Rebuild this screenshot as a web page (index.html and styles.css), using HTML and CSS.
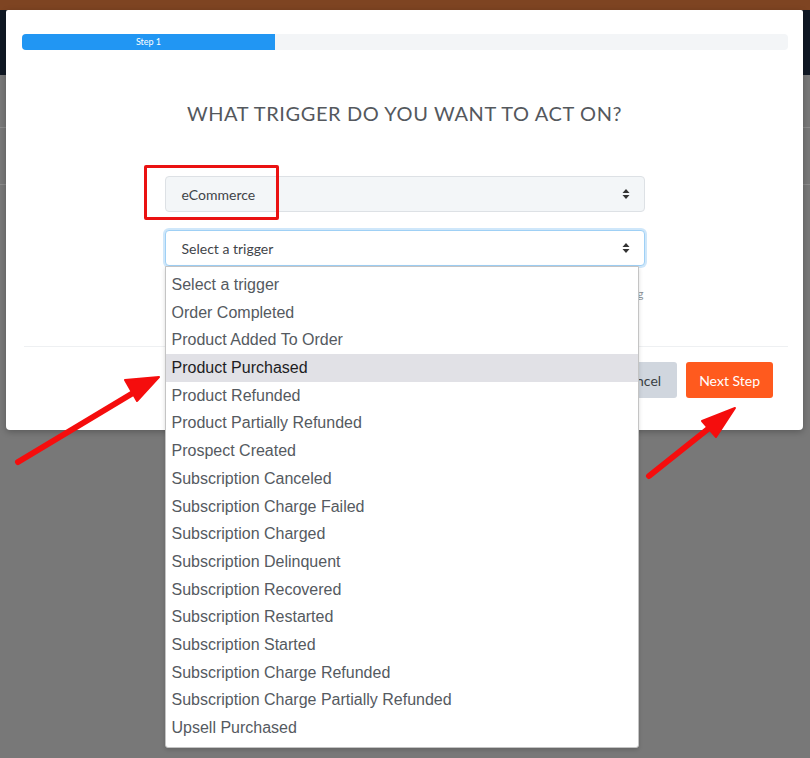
FILE: index.html
```html
<!DOCTYPE html>
<html lang="en">
<head>
  <meta charset="UTF-8">
  <meta name="viewport" content="width=device-width, initial-scale=1.0">
  <title>Select a trigger</title>
  <link rel="stylesheet" href="styles.css">
</head>
<body>

  <!-- dimmed page behind the modal -->
  <div class="page">
    <div class="topbar"></div>
    <div class="navbar"></div>
    <div class="page-lines">
      <div class="page-line"></div>
      <div class="page-line"></div>
    </div>
  </div>

  <div class="modal">
    <div class="progress">
      <div class="progress-fill">Step 1</div>
    </div>

    <h2 class="modal-title">What trigger do you want to act on?</h2>

    <div class="form">
      <div class="field category-field">
        <div class="select">
          <span>eCommerce</span>
          <svg class="caret" width="8" height="12" viewBox="0 0 8 12"><path d="M4 1 L7.5 5 H0.5 Z M4 11 L7.5 7 H0.5 Z" fill="#333"/></svg>
        </div>
        <div class="callout"></div>
      </div>

      <div class="field trigger-field">
        <div class="select focused">
          <span>Select a trigger</span>
          <svg class="caret" width="8" height="12" viewBox="0 0 8 12"><path d="M4 1 L7.5 5 H0.5 Z M4 11 L7.5 7 H0.5 Z" fill="#333"/></svg>
        </div>

        <ul class="dropdown">
          <li>Select a trigger</li>
          <li>Order Completed</li>
          <li>Product Added To Order</li>
          <li class="active">Product Purchased</li>
          <li>Product Refunded</li>
          <li>Product Partially Refunded</li>
          <li>Prospect Created</li>
          <li>Subscription Canceled</li>
          <li>Subscription Charge Failed</li>
          <li>Subscription Charged</li>
          <li>Subscription Delinquent</li>
          <li>Subscription Recovered</li>
          <li>Subscription Restarted</li>
          <li>Subscription Started</li>
          <li>Subscription Charge Refunded</li>
          <li>Subscription Charge Partially Refunded</li>
          <li>Upsell Purchased</li>
        </ul>
      </div>

      <div class="help">g</div>
    </div>

    <div class="modal-footer">
      <button class="button cancel">Cancel</button>
      <button class="button next">Next Step</button>
    </div>
  </div>

  <!-- red annotation arrows -->
  <svg class="annotations" width="810" height="758" viewBox="0 0 810 758">
    <g fill="#f50d0d" stroke="#f50d0d" stroke-linecap="round" stroke-linejoin="round">
      <line x1="18" y1="462" x2="138" y2="390" stroke-width="6"/>
      <polygon points="159,377 125,380 137,401" stroke-width="2"/>
      <line x1="649" y1="476" x2="718" y2="421" stroke-width="6"/>
      <polygon points="735,408 702,421 716,437" stroke-width="2"/>
    </g>
  </svg>

</body>
</html>
```

FILE: styles.css
```css
/* Basic styling */
body {
  margin: 0;
  background-color: #787878;
  font-family: Lato, "Open Sans", sans-serif;
  height: 758px;
  overflow: hidden;
}

/* Page behind the overlay */
.topbar {
  height: 10px;
  background: #7e4422;
}

.navbar {
  height: 65px;
  background: #101824;
}

.page-lines {
  padding-top: 52px;
}

.page-line {
  height: 1px;
  background: #8c8c8c;
  margin-bottom: 56px;
}

/* Modal */
.modal {
  position: absolute;
  top: 10px;
  left: 6px;
  width: 797px;
  height: 420px;
  background: #fff;
  border-radius: 2px 2px 4px 4px;
  box-shadow: 0 2px 6px rgba(0, 0, 0, 0.25);
  padding-top: 24px;
  box-sizing: border-box;
}

.progress {
  margin: 0 15px 0 16px;
  height: 16px;
  background: #f3f5f7;
  border-radius: 4px;
  overflow: hidden;
}

.progress-fill {
  width: 253px;
  height: 100%;
  background: #2196f3;
  color: #fff;
  font-size: 9px;
  line-height: 16px;
  text-align: center;
}

.modal-title {
  margin: 51px 0 0;
  font-size: 20px;
  line-height: 24px;
  font-weight: 400;
  color: #54585d;
  text-align: center;
  text-transform: uppercase;
  letter-spacing: 0.6px;
}

/* Form */
.form {
  width: 480px;
  margin: 51px auto 0;
  padding-bottom: 45px;
}

.field {
  position: relative;
}

.trigger-field {
  margin-top: 18px;
  z-index: 5;
}

.select {
  height: 36px;
  box-sizing: border-box;
  display: flex;
  align-items: center;
  justify-content: space-between;
  padding: 0 14px 0 16px;
  background: #f3f6f8;
  border: 1px solid #dde1e5;
  border-radius: 4px;
  font-size: 14px;
  color: #3f4449;
}

.select.focused {
  background: #fff;
  border-color: #9fd0f5;
  box-shadow: 0 0 0 2px #cfe7fa;
}

.callout {
  position: absolute;
  top: -11px;
  left: -21px;
  width: 135px;
  height: 55px;
  box-sizing: border-box;
  border: 3px solid #ea1212;
  border-radius: 2px;
}

/* only the tail of the help line peeks out beside the list */
.help {
  margin-top: 21px;
  font-size: 12px;
  line-height: 14px;
  color: #8f959b;
  text-align: right;
  padding-right: 1px;
}

/* Native-looking option list */
.dropdown {
  position: absolute;
  top: 100%;
  left: 0;
  width: 472px;
  margin: 0;
  padding: 4px 0 5px;
  list-style: none;
  background: #fff;
  border: 1px solid #c4c4c4;
  border-radius: 0 0 3px 3px;
  box-shadow: 0 2px 4px rgba(0, 0, 0, 0.15);
  font-family: "Liberation Sans", Arial, sans-serif;
  font-size: 16px;
  color: #555a5f;
}

.dropdown li {
  height: 27.7px;
  line-height: 27.7px;
  padding-left: 6px;
}

.dropdown li.active {
  background: #e1e1e6;
  color: #1d1d1f;
}

/* Footer */
.modal-footer {
  display: flex;
  justify-content: flex-end;
  gap: 9px;
  margin: 0 15px 0 18px;
  padding: 15px 15px 0 0;
  border-top: 1px solid #eef0f2;
}

.button {
  height: 36px;
  padding: 0 13px;
  border: none;
  border-radius: 3px;
  font-family: Lato, "Open Sans", sans-serif;
  font-size: 14px;
  cursor: pointer;
}

.cancel {
  background: #d0d6de;
  color: #3a3f44;
  padding: 0 16px;
}

.next {
  background: #ff5a1e;
  color: #fff;
}

/* Annotation overlay */
.annotations {
  position: absolute;
  top: 0;
  left: 0;
  pointer-events: none;
  z-index: 10;
}
```
